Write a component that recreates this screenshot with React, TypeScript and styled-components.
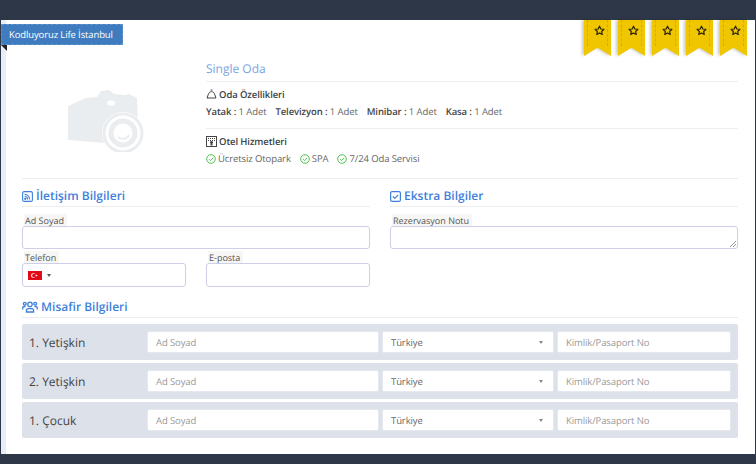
import React from 'react';
import styled, { createGlobalStyle } from 'styled-components';

const GlobalStyle = createGlobalStyle`
    html, body {
        margin: 0;
        padding: 0;
        background: #2d3748;
    }
    body {
        font-family: 'Open Sans', 'Liberation Sans', sans-serif;
        color: #444;
        text-rendering: geometricPrecision;
    }
    * {
        box-sizing: border-box;
    }
`;

const Page = styled.div`
    width: 756px;
    height: 464px;
    padding: 20px 1px 10px 1px;
    background: #2d3748;
    overflow: hidden;
`;

const Card = styled.div`
    position: relative;
    height: 434px;
    background: #fff;
    border-left: 5px solid #e9edf6;
    padding: 0 17px 0 16px;
`;

const Ribbon = styled.div`
    position: absolute;
    left: -5px;
    top: 4px;
    height: 21px;
    width: 122px;
    background: #3f7cbf;
    color: #fff;
    font-size: 9.5px;
    letter-spacing: -0.12px;
    line-height: 21px;
    padding-left: 8px;
    outline: 1px dashed #5f93cc;
    outline-offset: -1px;

    &::after {
        content: '';
        position: absolute;
        left: 0;
        top: 21px;
        border-top: 6px solid #222;
        border-left: 6px solid transparent;
    }
`;

const Badges = styled.div`
    position: absolute;
    top: 0;
    right: 8px;
    display: flex;
    gap: 7px;
    filter: drop-shadow(-2px 0 1.5px rgba(0, 0, 0, 0.22));
`;

const Badge = styled.div`
    position: relative;
    width: 27px;
    height: 36px;
    background: #efc600;
    clip-path: polygon(0 0, 100% 0, 100% 100%, 50% 77%, 0 100%);
    display: flex;
    justify-content: center;
    padding: 5px 0 0 3px;

    &::before,
    &::after {
        content: '';
        position: absolute;
        top: 0;
        height: 26px;
        border-left: 1px dashed #d6ae00;
    }
    &::before {
        left: 3px;
    }
    &::after {
        right: 3px;
    }
`;

const TopSection = styled.section`
    display: flex;
    height: 159px;
    border-bottom: 1px solid #eceef2;
`;

const PhotoColumn = styled.div`
    width: 184px;
    flex: none;
    padding: 70px 0 0 46px;
`;

const InfoColumn = styled.div`
    flex: 1;
`;

const RoomTitle = styled.h2`
    margin: 0;
    height: 62px;
    padding-top: 40px;
    font-size: 12px;
    line-height: 17px;
    font-weight: 400;
    color: #7ba3e0;
    border-bottom: 1px solid #eceef2;
`;

const InfoBlock = styled.div<{ $last?: boolean }>`
    height: 47px;
    padding-top: 5px;
    border-bottom: 1px solid ${({ $last }) => ($last ? 'transparent' : '#eceef2')};
`;

const InfoHeading = styled.div`
    display: flex;
    align-items: center;
    gap: 2px;
    height: 14px;
    font-size: 9.5px;
    letter-spacing: -0.1px;
    font-weight: 600;
    color: #3b3f46;
`;

const InfoRow = styled.div`
    display: flex;
    gap: 9px;
    margin-top: 4px;
    height: 14px;
    font-size: 9.5px;
    letter-spacing: -0.1px;
    line-height: 14px;
    color: #666;

    b {
        font-weight: 600;
        color: #444;
    }
`;

const Service = styled.span`
    display: flex;
    align-items: center;
    gap: 2px;
`;

const Columns = styled.div`
    display: grid;
    grid-template-columns: 348px 348px;
    column-gap: 20px;
    height: 118px;
    padding-top: 7px;
`;

const SectionHeading = styled.h3`
    display: flex;
    align-items: center;
    gap: 3px;
    margin: 0;
    height: 21px;
    font-size: 12px;
    line-height: 18px;
    font-weight: 600;
    color: #3f7fdc;
    border-bottom: 1px solid #eceef2;
`;

const FieldGrid = styled.div`
    display: grid;
    grid-template-columns: 164px 164px;
    column-gap: 20px;
    row-gap: 2px;
    margin-top: 7px;
`;

const Field = styled.div<{ $wide?: boolean }>`
    grid-column: ${({ $wide }) => ($wide ? '1 / -1' : 'auto')};
`;

const FieldLabel = styled.div`
    width: fit-content;
    height: 12px;
    margin-left: 2px;
    padding: 0 3px 0 1px;
    font-size: 9px;
    line-height: 13px;
    color: #555;
    background: #f6f6f4;
`;

const BoxInput = styled.div<{ $tall?: boolean }>`
    display: flex;
    align-items: center;
    height: ${({ $tall }) => ($tall ? '24px' : '23px')};
    border: 1px solid #cdd0e8;
    border-radius: 3px;
    background: #fff;
    padding-left: 5px;
    gap: 5px;
`;

const NoteBox = styled.div`
    position: relative;
    height: 23px;
    border: 1px solid #cdd0e8;
    border-radius: 3px;
`;

const Caret = styled.span<{ $tone?: string }>`
    width: 0;
    height: 0;
    border-left: 2.5px solid transparent;
    border-right: 2.5px solid transparent;
    border-top: 3px solid ${({ $tone }) => $tone || '#555'};
`;

const GuestSection = styled.section`
    height: 143px;
`;

const GuestRows = styled.div`
    display: flex;
    flex-direction: column;
    gap: 3px;
    margin-top: 6px;
`;

const GuestRow = styled.div`
    display: grid;
    grid-template-columns: 115px 232px 172px 174px;
    column-gap: 3px;
    align-items: center;
    height: 36px;
    padding: 0 7px;
    background: #dde1ea;
    border-radius: 2px;
`;

const GuestName = styled.div`
    font-size: 12px;
    color: #444;
`;

const GuestInput = styled.div<{ $select?: boolean }>`
    display: flex;
    align-items: center;
    justify-content: space-between;
    height: 22px;
    padding: 0 10px 0 8px;
    background: #fff;
    border: 1px solid #e6e8f0;
    border-radius: 2px;
    font-size: 9.5px;
    letter-spacing: -0.1px;
    color: ${({ $select }) => ($select ? '#666' : '#999')};
`;

const Check = () => (
    <svg width="10" height="10" viewBox="0 0 10 10" fill="none" stroke="#4fc34f" strokeWidth="1">
        <circle cx="5" cy="5" r="4.3" />
        <path d="M3 5.1l1.5 1.5L7.2 3.8" />
    </svg>
);

const Star = () => (
    <svg width="11" height="11" viewBox="0 0 24 24" fill="none" stroke="#2b2400" strokeWidth="2.6" strokeLinejoin="round">
        <path d="M12 2.5l2.9 6.2 6.8.8-5 4.6 1.3 6.7-6-3.4-6 3.4 1.3-6.7-5-4.6 6.8-.8z" />
    </svg>
);

const Camera = () => (
    <svg width="76" height="62" viewBox="0 0 76 62">
        <path d="M0 16 L18 8 L29 7 L33 1 L41 0 L46 4 L57 5 L61 4 L69 8 L70 40 L50 54 L0 50 Z" fill="#eaedef" />
        <ellipse cx="43" cy="13" rx="4" ry="2.6" fill="#fff" />
        <circle cx="55" cy="43" r="21" fill="#fff" />
        <circle cx="55" cy="43" r="19" fill="none" stroke="#eaedef" strokeWidth="3" />
        <circle cx="55" cy="43" r="12" fill="none" stroke="#eaedef" strokeWidth="5" />
        <path d="M50 47a7 7 0 0 0 11-2" fill="none" stroke="#eaedef" strokeWidth="2" />
    </svg>
);

const BellIcon = () => (
    <svg width="11" height="10" viewBox="0 0 11 10" fill="none" stroke="#444" strokeWidth="1">
        <path d="M1 9h9L8.6 5.2C8 3.6 7 2.6 5.5 2.6S3 3.6 2.4 5.2z" />
        <path d="M4.6 1h1.8" />
    </svg>
);

const HotelIcon = () => (
    <svg width="11" height="11" viewBox="0 0 11 11" fill="none" stroke="#444" strokeWidth="1">
        <rect x="0.5" y="0.5" width="10" height="10" />
        <path d="M2 2.5h7M2 4.5h7" strokeDasharray="1 1" />
        <path d="M5.5 5v4.5" strokeWidth="2" />
        <path d="M4 6.5h3" />
    </svg>
);

const RssIcon = () => (
    <svg width="11" height="11" viewBox="0 0 11 11" fill="none" stroke="#3f7fdc" strokeWidth="1.1">
        <rect x="0.6" y="0.6" width="9.8" height="9.8" rx="1.5" />
        <path d="M2.6 3.4a5 5 0 0 1 5 5M2.6 5.5a3 3 0 0 1 3 3" />
        <circle cx="3.2" cy="7.8" r="0.6" fill="#3f7fdc" />
    </svg>
);

const CheckSquareIcon = () => (
    <svg width="11" height="11" viewBox="0 0 11 11" fill="none" stroke="#3f7fdc" strokeWidth="1.2">
        <rect x="0.6" y="0.6" width="9.8" height="9.8" rx="1.5" />
        <path d="M2.8 5.4l2 2 3.4-3.6" />
    </svg>
);

const UsersIcon = () => (
    <svg width="16" height="12" viewBox="0 0 16 12" fill="none" stroke="#3f7fdc" strokeWidth="1.3">
        <circle cx="8" cy="3.4" r="2.2" />
        <path d="M4.4 11V9.6a2 2 0 0 1 2-2h3.2a2 2 0 0 1 2 2V11z" />
        <circle cx="2.8" cy="2.8" r="1.4" />
        <circle cx="13.2" cy="2.8" r="1.4" />
        <path d="M0.7 8.4V7A1.5 1.5 0 0 1 2.2 5.5h1.4M15.3 8.4V7a1.5 1.5 0 0 0-1.5-1.5h-1.4" />
    </svg>
);

const TurkishFlag = () => (
    <svg width="14" height="9" viewBox="0 0 14 9">
        <rect width="14" height="9" fill="#e30a17" />
        <circle cx="5.3" cy="4.5" r="2.3" fill="#fff" />
        <circle cx="5.9" cy="4.5" r="1.8" fill="#e30a17" />
        <circle cx="8.6" cy="4.5" r="0.8" fill="#fff" />
    </svg>
);

const ResizeGrip = styled.svg`
    position: absolute;
    right: 0;
    bottom: 0;
`;

const guests = ['1. Yetişkin', '2. Yetişkin', '1. Çocuk'];
const stars = [1, 2, 3, 4, 5];

const App = () => (
    <Page>
        <GlobalStyle />
        <Card>
            <Ribbon>Kodluyoruz Life İstanbul</Ribbon>
            <Badges>
                {stars.map((s) => (
                    <Badge key={s}>
                        <Star />
                    </Badge>
                ))}
            </Badges>

            <TopSection>
                <PhotoColumn>
                    <Camera />
                </PhotoColumn>
                <InfoColumn>
                    <RoomTitle>Single Oda</RoomTitle>
                    <InfoBlock>
                        <InfoHeading>
                            <BellIcon /> Oda Özellikleri
                        </InfoHeading>
                        <InfoRow>
                            <span><b>Yatak :</b> 1 Adet</span>
                            <span><b>Televizyon :</b> 1 Adet</span>
                            <span><b>Minibar :</b> 1 Adet</span>
                            <span><b>Kasa :</b> 1 Adet</span>
                        </InfoRow>
                    </InfoBlock>
                    <InfoBlock $last>
                        <InfoHeading>
                            <HotelIcon /> Otel Hizmetleri
                        </InfoHeading>
                        <InfoRow>
                            <Service><Check /> Ücretsiz Otopark</Service>
                            <Service><Check /> SPA</Service>
                            <Service><Check /> 7/24 Oda Servisi</Service>
                        </InfoRow>
                    </InfoBlock>
                </InfoColumn>
            </TopSection>

            <Columns>
                <div>
                    <SectionHeading>
                        <RssIcon /> İletişim Bilgileri
                    </SectionHeading>
                    <FieldGrid>
                        <Field $wide>
                            <FieldLabel>Ad Soyad</FieldLabel>
                            <BoxInput />
                        </Field>
                        <Field>
                            <FieldLabel>Telefon</FieldLabel>
                            <BoxInput $tall>
                                <TurkishFlag />
                                <Caret />
                            </BoxInput>
                        </Field>
                        <Field>
                            <FieldLabel>E-posta</FieldLabel>
                            <BoxInput $tall />
                        </Field>
                    </FieldGrid>
                </div>
                <div>
                    <SectionHeading>
                        <CheckSquareIcon /> Ekstra Bilgiler
                    </SectionHeading>
                    <FieldGrid>
                        <Field $wide>
                            <FieldLabel>Rezervasyon Notu</FieldLabel>
                            <NoteBox>
                                <ResizeGrip width="8" height="8" viewBox="0 0 8 8" stroke="#777" strokeWidth="0.8">
                                    <path d="M1 7l6-6M4 7l3-3" />
                                </ResizeGrip>
                            </NoteBox>
                        </Field>
                    </FieldGrid>
                </div>
            </Columns>

            <GuestSection>
                <SectionHeading>
                    <UsersIcon /> Misafir Bilgileri
                </SectionHeading>
                <GuestRows>
                    {guests.map((g) => (
                        <GuestRow key={g}>
                            <GuestName>{g}</GuestName>
                            <GuestInput>Ad Soyad</GuestInput>
                            <GuestInput $select>
                                Türkiye
                                <Caret $tone="#888" />
                            </GuestInput>
                            <GuestInput>Kimlik/Pasaport No</GuestInput>
                        </GuestRow>
                    ))}
                </GuestRows>
            </GuestSection>
        </Card>
    </Page>
);

export default App;
